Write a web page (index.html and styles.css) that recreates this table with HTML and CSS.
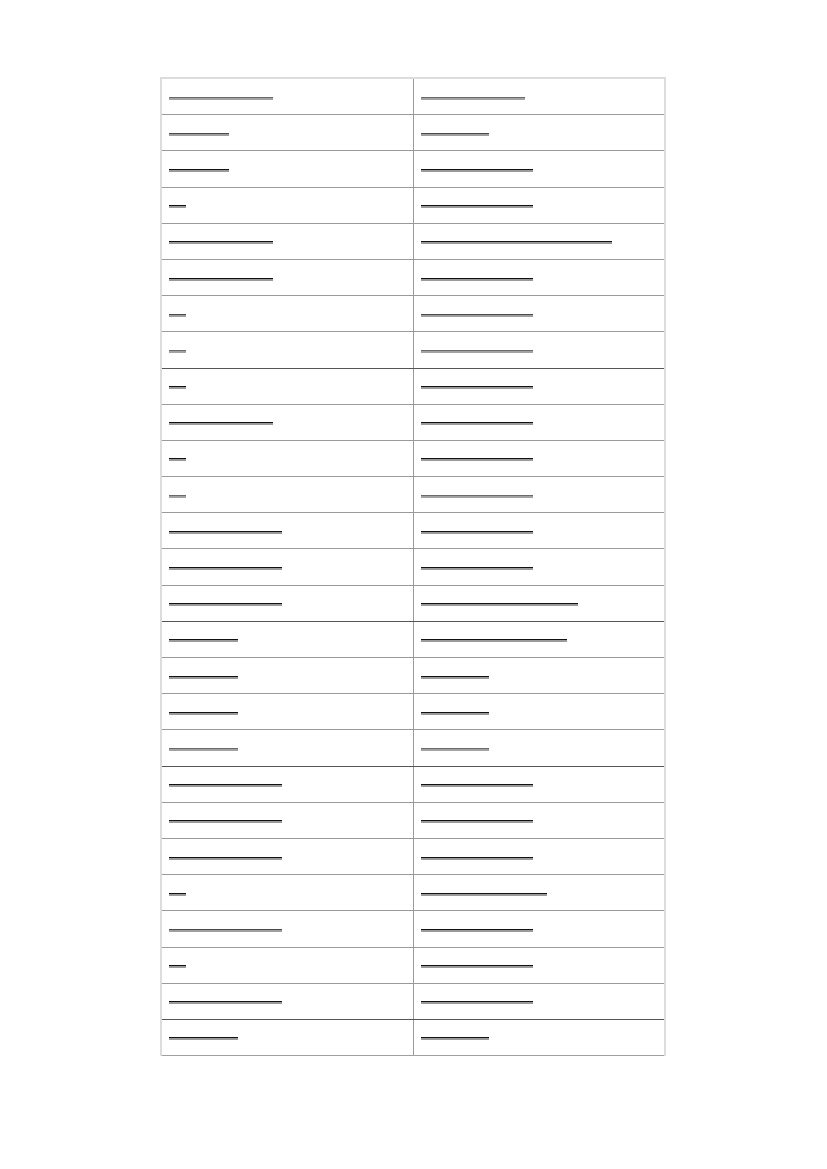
FILE: index.html
```html
<!DOCTYPE html>
<html lang="en">
<head>
<meta charset="utf-8">
<title>Table</title>
<link rel="stylesheet" href="styles.css">
</head>
<body>
<div class="page">
  <div class="table">
    <div class="row"><div class="cell"><span class="bar g" style="width:104px"></span></div><div class="cell"><span class="bar g" style="width:104px"></span></div></div>
    <div class="row"><div class="cell"><span class="bar m" style="width:60px"></span></div><div class="cell"><span class="bar m" style="width:68px"></span></div></div>
    <div class="row"><div class="cell"><span class="bar d" style="width:60px"></span></div><div class="cell"><span class="bar d" style="width:112px"></span></div></div>
    <div class="row"><div class="cell"><span class="bar d" style="width:17px"></span></div><div class="cell"><span class="bar d" style="width:112px"></span></div></div>
    <div class="row"><div class="cell"><span class="bar d" style="width:104px"></span></div><div class="cell"><span class="bar d" style="width:191px"></span></div></div>
    <div class="row"><div class="cell"><span class="bar d" style="width:104px"></span></div><div class="cell"><span class="bar d" style="width:112px"></span></div></div>
    <div class="row"><div class="cell"><span class="bar m" style="width:17px"></span></div><div class="cell"><span class="bar m" style="width:112px"></span></div></div>
    <div class="row dark"><div class="cell"><span class="bar g" style="width:17px"></span></div><div class="cell"><span class="bar g" style="width:112px"></span></div></div>
    <div class="row"><div class="cell"><span class="bar d" style="width:17px"></span></div><div class="cell"><span class="bar d" style="width:112px"></span></div></div>
    <div class="row"><div class="cell"><span class="bar d" style="width:104px"></span></div><div class="cell"><span class="bar d" style="width:112px"></span></div></div>
    <div class="row"><div class="cell"><span class="bar d" style="width:17px"></span></div><div class="cell"><span class="bar d" style="width:112px"></span></div></div>
    <div class="row"><div class="cell"><span class="bar g" style="width:17px"></span></div><div class="cell"><span class="bar g" style="width:112px"></span></div></div>
    <div class="row"><div class="cell"><span class="bar d" style="width:113px"></span></div><div class="cell"><span class="bar d" style="width:112px"></span></div></div>
    <div class="row"><div class="cell"><span class="bar d" style="width:113px"></span></div><div class="cell"><span class="bar d" style="width:112px"></span></div></div>
    <div class="row dark"><div class="cell"><span class="bar d" style="width:113px"></span></div><div class="cell"><span class="bar d" style="width:157px"></span></div></div>
    <div class="row"><div class="cell"><span class="bar d" style="width:69px"></span></div><div class="cell"><span class="bar d" style="width:146px"></span></div></div>
    <div class="row"><div class="cell"><span class="bar d" style="width:69px"></span></div><div class="cell"><span class="bar d" style="width:68px"></span></div></div>
    <div class="row"><div class="cell"><span class="bar d" style="width:69px"></span></div><div class="cell"><span class="bar d" style="width:68px"></span></div></div>
    <div class="row dark"><div class="cell"><span class="bar g" style="width:69px"></span></div><div class="cell"><span class="bar g" style="width:68px"></span></div></div>
    <div class="row"><div class="cell"><span class="bar d" style="width:113px"></span></div><div class="cell"><span class="bar d" style="width:112px"></span></div></div>
    <div class="row"><div class="cell"><span class="bar d" style="width:113px"></span></div><div class="cell"><span class="bar d" style="width:112px"></span></div></div>
    <div class="row"><div class="cell"><span class="bar d" style="width:113px"></span></div><div class="cell"><span class="bar d" style="width:112px"></span></div></div>
    <div class="row"><div class="cell"><span class="bar d" style="width:17px"></span></div><div class="cell"><span class="bar d" style="width:126px"></span></div></div>
    <div class="row"><div class="cell"><span class="bar m" style="width:113px"></span></div><div class="cell"><span class="bar d" style="width:112px"></span></div></div>
    <div class="row"><div class="cell"><span class="bar d" style="width:17px"></span></div><div class="cell"><span class="bar d" style="width:112px"></span></div></div>
    <div class="row dark"><div class="cell"><span class="bar d" style="width:113px"></span></div><div class="cell"><span class="bar d" style="width:112px"></span></div></div>
    <div class="row last"><div class="cell"><span class="bar d" style="width:69px"></span></div><div class="cell"><span class="bar d" style="width:68px"></span></div></div>
  </div>
</div>
</body>
</html>
```

FILE: styles.css
```css
html, body {
  margin: 0;
  padding: 0;
  background: #ffffff;
  font-family: "Liberation Sans", Arial, sans-serif;
}

.page {
  width: 827px;
  height: 1169px;
  padding: 77px 0 0 160px;
  box-sizing: border-box;
}

.table {
  width: 506px;
  border-top: 2px solid #dcdcdc;
  border-left: 2px solid #dcdcdc;
  border-right: 2px solid #dcdcdc;
  box-sizing: border-box;
}

.row {
  display: grid;
  grid-template-columns: 251px 1fr;
  height: 36.2px;
  border-bottom: 1px solid #9a9a9a;
  box-sizing: border-box;
}

.row.dark {
  border-bottom-color: #555555;
}

.row.last {
  border-bottom-color: #a0a0a0;
}

.cell {
  display: flex;
  align-items: center;
  padding: 3px 0 0 7px;
  box-sizing: border-box;
}

.cell + .cell {
  border-left: 1px solid #9a9a9a;
}

.bar {
  display: block;
  height: 2px;
  background: #9c9c9c;
  border-top: 1px solid #555555;
}

.bar.g {
  border-top-color: #6a6a6a;
  background: #a2a2a2;
}

.bar.m {
  border-top-color: #4a4a4a;
  background: #9e9e9e;
}

.bar.d {
  border-top-color: #111111;
  background: #9a9a9a;
}
```
